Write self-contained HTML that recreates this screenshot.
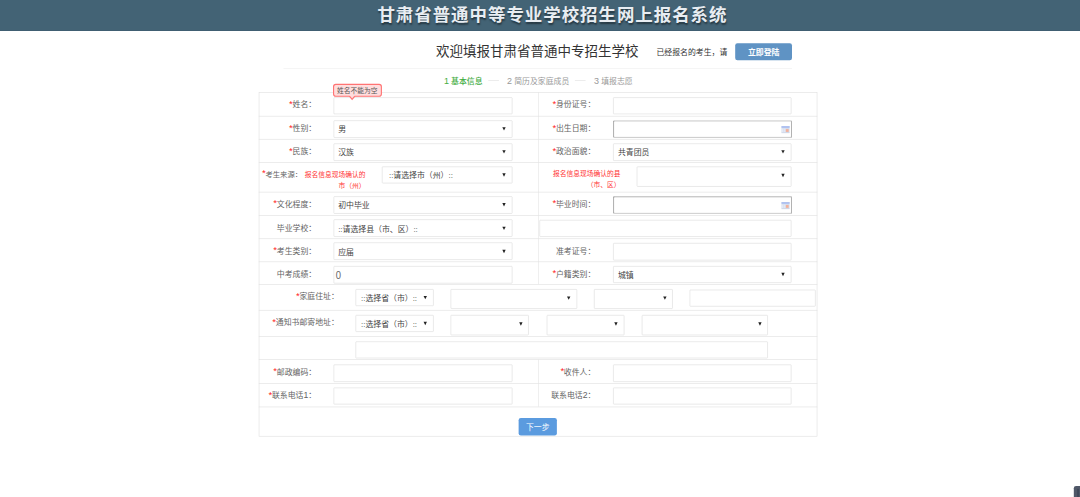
<!DOCTYPE html>
<html lang="zh-CN"><head><meta charset="utf-8"><title>甘肃省普通中等专业学校招生网上报名系统</title>
<style>
html,body{margin:0;padding:0;background:#fff;}
body{width:1080px;height:497px;overflow:hidden;position:relative;font-family:"Liberation Sans", "Noto Sans CJK SC", sans-serif;}
#pg{position:absolute;left:0;top:0;width:1920px;height:884px;transform:scale(0.5625);transform-origin:0 0;overflow:hidden;background:#fff;color:#333;}
#pg div{position:absolute;box-sizing:border-box;white-space:nowrap;}
.hdr{left:0;top:0;width:1920px;height:55px;background:#436375;border-bottom:1.5px solid #375569;}
.ttl{top:4.8px;height:46px;line-height:46px;font-size:31px;font-weight:bold;letter-spacing:1.75px;color:#e8edf2;text-shadow:1px 2px 3px rgba(0,0,0,.45);}
.sub{font-size:24px;height:40px;line-height:40px;color:#333;}
.already{font-size:14px;height:20px;line-height:20px;color:#333;}
.loginbtn{background:#5f93c4;color:#fff;font-size:14px;font-weight:bold;text-align:center;border-radius:4px;}
.hr{height:1px;background:#eee;}
.step{font-size:14px;height:20px;line-height:20px;color:#999;}
.step.on{color:#43ad43;font-weight:500;}
.step em{font-style:normal;font-size:16px;line-height:0;}
.dash{height:1px;background:#ddd;}
.tbl{border:1px solid #ddd;}
.rl{height:1px;background:#ddd;}
.vl{width:1px;background:#e2e2e2;}
.lbl{font-size:14px;height:20px;line-height:20px;text-align:right;color:#646464;margin-top:-0.7px;}
.inp em{font-style:normal;font-size:19px;color:#666;line-height:0;display:inline-block;transform:scaleX(0.88);transform-origin:0 50%;position:relative;top:1.6px;}
.inp span{left:3px !important;}
.lbl em{font-style:normal;font-size:15.5px;line-height:0;}
.req{color:#f22;font-style:normal;font-size:17px;line-height:0;position:relative;top:-1.3px;left:0.5px;}
.inp,.sel{border:1px solid #d9d9d9;border-radius:1.5px;background:#fff;}
.inp span,.sel span{position:absolute;left:6px;top:50%;margin-top:-9px;height:20px;line-height:20px;font-size:14px;color:#444;}
.arr{position:absolute;top:50%;margin-top:-3px;width:0;height:0;border-left:3.7px solid transparent;border-right:3.7px solid transparent;border-top:6.2px solid #222;}
.date{border:2px solid #9c9c9c;border-right-color:#b2b2b2;border-bottom-color:#b2b2b2;border-radius:2px;background:#fff;}
.cal{position:absolute;right:1.2px;top:7.3px;}
.src{font-size:12px;line-height:19.7px;color:#f33;text-align:right;white-space:normal !important;}
.src .k{font-size:13px;color:#646464;margin-right:5px;}
.next{background:#5b9bdf;color:#fff;font-size:14px;text-align:center;border-radius:4px;padding-top:1.2px;}
.tip{border:2px solid #ff7373;background:#fdd;border-radius:5px;font-size:12px;color:#555;text-align:center;}
.tip s{position:absolute;left:50%;margin-left:-15px;bottom:-8px;width:0;height:0;border-left:6px solid transparent;border-right:6px solid transparent;border-top:7px solid #ff7373;}
.tip u{position:absolute;left:50%;margin-left:-14px;bottom:-5px;width:0;height:0;border-left:5px solid transparent;border-right:5px solid transparent;border-top:6px solid #fdd;}
.corner{width:14px;height:24px;background:#505868;border-radius:4px 0 0 0;}
.corner i{position:absolute;left:5.5px;top:5px;width:3px;height:20px;background:#3e4658;}
</style></head>
<body><div id="pg">
<div class="hdr"><div class="ttl" style="left:671.0px;">甘肃省普通中等专业学校招生网上报名系统</div></div>
<div class="sub" style="left:775.11px;top:72.18px;">欢迎填报甘肃省普通中专招生学校</div>
<div class="already" style="left:1167.11px;top:82.27px;">已经报名的考生，请</div>
<div class="loginbtn" style="left:1307.38px;top:76.98px;width:100.43999999999983px;height:30.039999999999992px;line-height:30.039999999999992px;">立即登陆</div>
<div class="hr" style="left:503.64px;top:120.92px;width:904.18px;"></div>
<div class="step on" style="left:789.16px;top:134.17px;"><em>1</em> 基本信息</div>
<div class="dash" style="left:867.56px;top:143.47px;width:19.370000000000005px;"></div>
<div class="step" style="left:901.33px;top:134.17px;"><em>2</em> 简历及家庭成员</div>
<div class="dash" style="left:1022.22px;top:143.47px;width:19.200000000000045px;"></div>
<div class="step" style="left:1056.0px;top:134.17px;"><em>3</em> 填报志愿</div>
<div class="tbl" style="left:459.56px;top:164.27px;width:993.24px;height:611.5500000000001px;"></div>
<div class="rl" style="left:459.56px;top:206.04px;width:993.24px;"></div>
<div class="rl" style="left:459.56px;top:247.29px;width:993.24px;"></div>
<div class="rl" style="left:459.56px;top:288.36px;width:993.24px;"></div>
<div class="rl" style="left:459.56px;top:341.16px;width:993.24px;"></div>
<div class="rl" style="left:459.56px;top:382.58px;width:993.24px;"></div>
<div class="rl" style="left:459.56px;top:423.64px;width:993.24px;"></div>
<div class="rl" style="left:459.56px;top:464.89px;width:993.24px;"></div>
<div class="rl" style="left:459.56px;top:505.42px;width:993.24px;"></div>
<div class="rl" style="left:459.56px;top:551.47px;width:993.24px;"></div>
<div class="rl" style="left:459.56px;top:598.04px;width:993.24px;"></div>
<div class="rl" style="left:459.56px;top:639.11px;width:993.24px;"></div>
<div class="rl" style="left:459.56px;top:681.42px;width:993.24px;"></div>
<div class="rl" style="left:459.56px;top:722.67px;width:993.24px;"></div>
<div class="vl" style="left:956.98px;top:164.27px;height:341.15px;"></div>
<div class="vl" style="left:956.98px;top:639.11px;height:83.55999999999995px;"></div>
<div class="lbl" style="left:262.08000000000004px;width:300px;top:177.03px;"><i class="req">*</i>姓名：</div>
<div class="lbl" style="left:758.4200000000001px;width:300px;top:177.03px;"><i class="req">*</i>身份证号：</div>
<div class="inp" style="left:592.71px;top:172.57000000000002px;width:318px;height:30.7px;"></div>
<div class="inp" style="left:1090.13px;top:172.57000000000002px;width:317px;height:30.7px;"></div>
<div class="lbl" style="left:262.08000000000004px;width:300px;top:218.79999999999998px;"><i class="req">*</i>性别：</div>
<div class="lbl" style="left:758.4200000000001px;width:300px;top:218.79999999999998px;"><i class="req">*</i>出生日期：</div>
<div class="sel" style="left:592.71px;top:213.84px;width:318px;height:30.7px;"><span style="left:7.5px">男</span><b class="arr" style="right:10.700000000000001px;"></b></div>
<div class="date" style="left:1090.13px;top:214.34px;width:317.5px;height:31px;"><svg class="cal" viewBox="0 0 15 13" width="15" height="13"><rect x="0" y="0" width="15" height="13" rx="1" fill="#d3dcec"/><rect x="0" y="0" width="15" height="3.5" fill="#b0c2f0"/><rect x="1" y="4.5" width="6.5" height="7" fill="#e4eaf6"/><rect x="4" y="4.5" width="1" height="7" fill="#cfd8ea"/><rect x="8" y="5.5" width="5" height="5" fill="#f3b09a"/><rect x="0" y="12" width="15" height="1" fill="#c2ccdc"/></svg></div>
<div class="lbl" style="left:262.08000000000004px;width:300px;top:260.05px;"><i class="req">*</i>民族：</div>
<div class="lbl" style="left:758.4200000000001px;width:300px;top:260.05px;"><i class="req">*</i>政治面貌：</div>
<div class="sel" style="left:592.71px;top:255.09px;width:318px;height:30.7px;"><span style="left:7.5px">汉族</span><b class="arr" style="right:10.700000000000001px;"></b></div>
<div class="sel" style="left:1090.13px;top:255.09px;width:317px;height:30.7px;"><span style="left:7.5px">共青团员</span><b class="arr" style="right:10.700000000000001px;"></b></div>
<div class="src" style="left:389.96000000000004px;width:260px;top:300.4px;"><span class="k"><i class="req">*</i>考生来源：</span>报名信息现场确认的<br>市（州）</div>
<div class="sel" style="left:679.47px;top:296.0px;width:231.28999999999996px;height:30px;"><span style="left:11px">::请选择市（州）::</span><b class="arr" style="right:10.700000000000001px;"></b></div>
<div class="src" style="left:843.29px;width:260px;top:300.4px;">报名信息现场确认的县<br>（市、区）</div>
<div class="sel" style="left:1132.44px;top:296.0px;width:274.31999999999994px;height:36px;"><b class="arr" style="right:10.700000000000001px;margin-top:-5px;"></b></div>
<div class="lbl" style="left:262.08000000000004px;width:300px;top:353.92px;"><i class="req">*</i>文化程度：</div>
<div class="lbl" style="left:758.4200000000001px;width:300px;top:353.92px;"><i class="req">*</i>毕业时间：</div>
<div class="sel" style="left:592.71px;top:348.96000000000004px;width:318px;height:30.7px;"><span style="left:7.5px">初中毕业</span><b class="arr" style="right:10.700000000000001px;"></b></div>
<div class="date" style="left:1090.13px;top:349.46000000000004px;width:317.5px;height:31px;"><svg class="cal" viewBox="0 0 15 13" width="15" height="13"><rect x="0" y="0" width="15" height="13" rx="1" fill="#d3dcec"/><rect x="0" y="0" width="15" height="3.5" fill="#b0c2f0"/><rect x="1" y="4.5" width="6.5" height="7" fill="#e4eaf6"/><rect x="4" y="4.5" width="1" height="7" fill="#cfd8ea"/><rect x="8" y="5.5" width="5" height="5" fill="#f3b09a"/><rect x="0" y="12" width="15" height="1" fill="#c2ccdc"/></svg></div>
<div class="lbl" style="left:262.08000000000004px;width:300px;top:395.34px;">毕业学校：</div>
<div class="sel" style="left:592.71px;top:390.38px;width:318px;height:30.7px;"><span style="left:7.5px">::请选择县（市、区）::</span><b class="arr" style="right:10.700000000000001px;"></b></div>
<div class="inp" style="left:958.93px;top:390.88px;width:447.83000000000004px;height:30px;"></div>
<div class="lbl" style="left:262.08000000000004px;width:300px;top:436.4px;"><i class="req">*</i>考生类别：</div>
<div class="lbl" style="left:758.4200000000001px;width:300px;top:436.4px;">准考证号：</div>
<div class="sel" style="left:592.71px;top:431.44px;width:318px;height:30.7px;"><span style="left:7.5px">应届</span><b class="arr" style="right:10.700000000000001px;"></b></div>
<div class="inp" style="left:1090.13px;top:431.94px;width:317px;height:30.7px;"></div>
<div class="lbl" style="left:262.08000000000004px;width:300px;top:477.65px;">中考成绩：</div>
<div class="lbl" style="left:758.4200000000001px;width:300px;top:477.65px;"><i class="req">*</i>户籍类别：</div>
<div class="inp" style="left:592.71px;top:473.19px;width:318px;height:30.7px;"><span><em>0</em></span></div>
<div class="sel" style="left:1090.13px;top:472.69px;width:317px;height:30.7px;"><span style="left:7.5px">城镇</span><b class="arr" style="right:10.700000000000001px;"></b></div>
<div class="lbl" style="left:302.26px;width:300px;top:517.64px;"><i class="req">*</i>家庭住址：</div>
<div class="sel" style="left:631.82px;top:514.49px;width:139.19999999999993px;height:30px;"><span style="left:9px">::选择省（市）::</span><b class="arr" style="right:10.700000000000001px;"></b></div>
<div class="sel" style="left:801.42px;top:514.13px;width:224.36px;height:35px;"><b class="arr" style="right:10.700000000000001px;margin-top:-5px;"></b></div>
<div class="sel" style="left:1056.0px;top:514.13px;width:140.44000000000005px;height:35px;"><b class="arr" style="right:10.700000000000001px;margin-top:-5px;"></b></div>
<div class="inp" style="left:1226.31px;top:514.84px;width:223.6500000000001px;height:30px;"></div>
<div class="lbl" style="left:302.26px;width:300px;top:563.69px;"><i class="req">*</i>通知书邮寄地址：</div>
<div class="sel" style="left:631.82px;top:560.36px;width:139.19999999999993px;height:30px;"><span style="left:9px">::选择省（市）::</span><b class="arr" style="right:10.700000000000001px;"></b></div>
<div class="sel" style="left:801.42px;top:559.64px;width:138.85000000000002px;height:36px;"><b class="arr" style="right:10.700000000000001px;margin-top:-5px;"></b></div>
<div class="sel" style="left:971.56px;top:559.64px;width:138.48000000000002px;height:36px;"><b class="arr" style="right:10.700000000000001px;margin-top:-5px;"></b></div>
<div class="sel" style="left:1141.33px;top:559.64px;width:224.0px;height:36px;"><b class="arr" style="right:10.700000000000001px;margin-top:-5px;"></b></div>
<div class="inp" style="left:631.82px;top:606.58px;width:733.5099999999999px;height:30px;"></div>
<div class="lbl" style="left:262.08000000000004px;width:300px;top:651.87px;"><i class="req">*</i>邮政编码：</div>
<div class="lbl" style="left:758.4200000000001px;width:300px;top:651.87px;"><i class="req">*</i>收件人：</div>
<div class="inp" style="left:592.71px;top:648.11px;width:318px;height:30.7px;"></div>
<div class="inp" style="left:1090.13px;top:648.11px;width:317px;height:30.7px;"></div>
<div class="lbl" style="left:262.08000000000004px;width:300px;top:694.18px;"><i class="req">*</i>联系电话<em>1</em>：</div>
<div class="lbl" style="left:758.4200000000001px;width:300px;top:694.18px;">联系电话<em>2</em>：</div>
<div class="inp" style="left:592.71px;top:688.7199999999999px;width:318px;height:30.7px;"></div>
<div class="inp" style="left:1090.13px;top:688.7199999999999px;width:317px;height:30.7px;"></div>
<div class="next" style="left:922.13px;top:742.76px;width:67.90999999999997px;height:31.110000000000014px;line-height:31.110000000000014px;">下一步</div>
<div class="tip" style="left:592.0px;top:149.16px;width:86.58000000000004px;height:22.930000000000007px;line-height:21.930000000000007px;">姓名不能为空<s></s><u></u></div>
<div class="corner" style="left:1909.33px;top:864.0px;"><i></i></div>
</div></body></html>
